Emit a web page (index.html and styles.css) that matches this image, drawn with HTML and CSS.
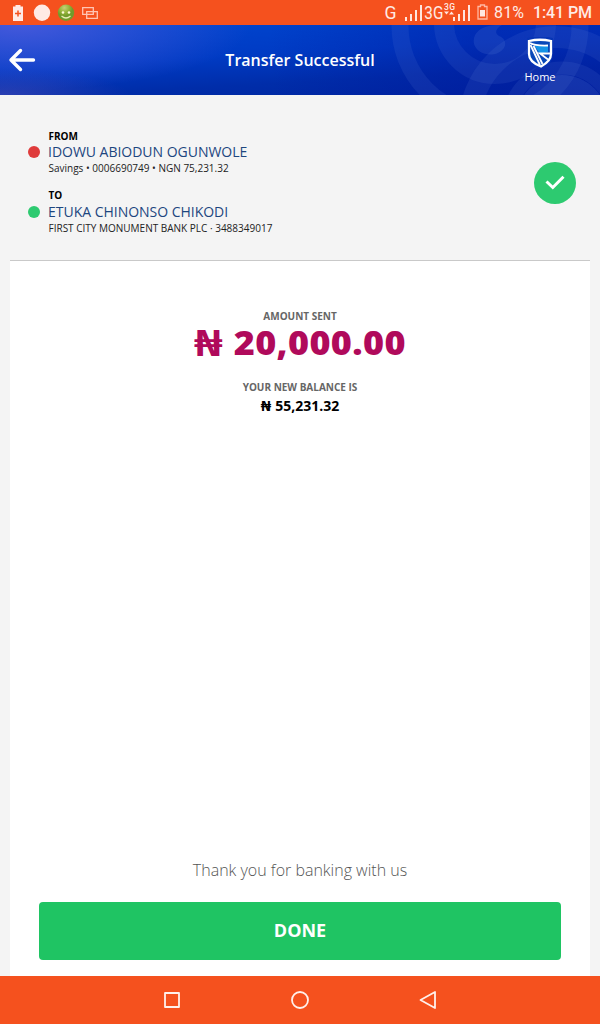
FILE: index.html
```html
<!DOCTYPE html>
<html lang="en">
<head>
<meta charset="utf-8">
<title>Transfer Successful</title>
<link rel="stylesheet" href="styles.css">
</head>
<body>
<div class="statusbar">
  <svg class="notifications" width="100" height="25" viewBox="0 0 100 25">
    <path fill="#ffeae5" d="M13 6.500h2.500v-1.500h5v1.500h2.500v14.500h-10z"/>
    <path stroke="#f5511e" stroke-width="1.500" d="M15 13.500h6M18 10.500v6"/>
    <circle cx="42" cy="12.700" r="8.200" fill="#ffeae5"/>
    <defs><radialGradient id="smile" cx=".4" cy=".2"><stop offset="0" stop-color="#c6d178"/><stop offset=".6" stop-color="#95b33a"/><stop offset="1" stop-color="#729b2b"/></radialGradient></defs>
    <circle cx="66" cy="12.700" r="8.200" fill="url(#smile)"/>
    <circle cx="63" cy="12.500" r="1.300" fill="#fff9d8"/><circle cx="69" cy="12.500" r="1.300" fill="#fff9d8"/>
    <path d="M61.500 16q4.500 4 9 0" fill="none" stroke="#e6edb0" stroke-width="1.200"/>
    <path d="M82.700 7.700h10.600v6.600h-10.600zM86.700 11.700h10.600v6.600h-10.600z" fill="none" stroke="#ffc5b4" stroke-width="1.300"/>
  </svg>
  <svg class="system" width="220" height="25" viewBox="380 0 220 25">
    <g fill="#ffe6df">
      <path d="M405 17h2v4h-2zM410 14h2v7h-2zM415 10h2v11h-2zM420 5h2v16h-2zM453 17h2v4h-2zM458 14h2v7h-2zM463 10h2v11h-2zM468 5h2v16h-2z"/>
      <path d="M444 11.500h5l-2.500 3zM449 14.500h5l-2.500-3z"/>
      <path d="M480 10h5v6.500h-5z"/>
    </g>
    <path d="M478 6.500h2.500v-1.500h4v1.500h2.500v12.500h-9z" fill="none" stroke="#ffb8a2" stroke-width="1.300"/>
    <g class="status-text" fill="#ffebe5">
      <text class="carrier" x="384.500" y="18.700" textLength="12" lengthAdjust="spacingAndGlyphs">G</text>
      <text class="carrier" x="424.300" y="18.700" textLength="19" lengthAdjust="spacingAndGlyphs">3G</text>
      <text class="tiny" x="444" y="9.500" textLength="11">3G</text>
      <text x="494" y="18" textLength="30">81%</text>
      <text class="clock" x="533" y="18" textLength="59">1:41 PM</text>
    </g>
  </svg>
</div>
<header class="header">
  <svg class="rings" width="220" height="70" viewBox="380 25 220 70" fill="none" stroke="#6c8ce0" stroke-opacity=".12">
    <circle cx="490" cy="26" r="90" stroke-width="17"/>
    <circle cx="495" cy="23" r="51" stroke-width="20"/>
    <path d="M502 25c-22-1-30 9-28 19 3 11 22 15 30 4 3-6 0-10-5-12-5-3-3-8 3-11z" fill="#6c8ce0" fill-opacity=".16" stroke="none"/>
    <circle cx="556" cy="123" r="86" stroke-width="22"/>
    <circle cx="562" cy="121" r="46" stroke="none" fill="#6c8ce0" fill-opacity=".18"/>
    <circle cx="562" cy="121" r="53" stroke-width="13"/>
  </svg>
  <svg class="back" width="28" height="24" viewBox="8 48 28 24" fill="none" stroke="#fff" stroke-width="3.400" stroke-linecap="round" stroke-linejoin="round"><path d="M20.500 50.500l-9.500 9.500 9.500 9.500M11 60h22.500"/></svg>
  <h1 class="title">Transfer Successful</h1>
  <div class="home">
    <svg width="28" height="32" viewBox="526 37 28 32">
      <path d="M527 38q13-3 26 0v16q0 10-13 15-13-5-13-15z" fill="#0735b5"/>
      <path d="M529 41q11-2.500 22 0v13q0 7-10 12.500-12-4.500-12-12.500z" fill="#0748b9" stroke="#fff" stroke-width="2.300"/>
      <path d="M534 45l14 1v6l-8 2z" fill="#1493e6"/>
      <path d="M530 43q5 3 18 2.500M530.500 45l9.500 20M533.500 46l9 18M550 53.500h-10l8 6" fill="none" stroke="#fff" stroke-width="1.800"/>
    </svg>
    <span class="home-label">Home</span>
  </div>
</header>
<main class="page">
  <section class="parties">
    <div class="party-list">
      <div class="party">
        <div class="role">FROM</div>
        <div class="name from">IDOWU ABIODUN OGUNWOLE</div>
        <div class="account savings">Savings • 0006690749 • NGN 75,231.32</div>
      </div>
      <div class="party recipient">
        <div class="role">TO</div>
        <div class="name to">ETUKA CHINONSO CHIKODI</div>
        <div class="account bank">FIRST CITY MONUMENT BANK PLC · 3488349017</div>
      </div>
    </div>
    <div class="success"><svg width="42" height="42" viewBox="0 0 42 42"><path d="M12.500 19.500l6.300 6L29.500 14.800" fill="none" stroke="#fff" stroke-width="3"/></svg></div>
  </section>
  <section class="receipt">
    <div class="caption">AMOUNT SENT</div>
    <div class="amount"><span class="naira">₦</span><span class="figure">20,000.00</span></div>
    <div class="caption balance-caption">YOUR NEW BALANCE IS</div>
    <div class="balance"><span class="naira">₦</span><span>55,231.32</span></div>
    <p class="thanks">Thank you for banking with us</p>
    <button class="done">DONE</button>
  </section>
</main>
<nav class="navbar">
  <svg width="600" height="48" viewBox="0 0 600 48" fill="none" stroke="#fff0eb" stroke-width="1.800" stroke-linejoin="round"><rect x="165" y="17" width="14" height="14"/><circle cx="300" cy="24" r="8"/><path d="M435 16v16l-14.500-8z"/></svg>
</nav>
</body>
</html>
```
FILE: styles.css
```css
* { box-sizing: border-box; }
body { margin: 0; width: 600px; height: 1024px; display: flex; flex-direction: column; overflow: hidden; background: #f4f4f4; font-family: "Open Sans", "Noto Sans", sans-serif; }
svg { display: block; }
.statusbar { height: 25px; flex: none; display: flex; justify-content: space-between; background: #f5511e; }
.status-text { font: 16px Roboto, sans-serif; }
.carrier { font-size: 17.500px; }
.tiny { font-size: 8.500px; font-weight: 500; }
.clock { font-weight: 500; }
.header { position: relative; height: 70px; flex: none; display: grid; grid-template-columns: 40px 1fr 40px; align-items: center; padding: 0 40px 0 8px; color: #fff;
  background:
    radial-gradient(ellipse 130px 25px at 0 100%, rgba(60,70,180,.7), transparent),
    radial-gradient(ellipse 230px 65px at 20px 0, rgba(75,90,220,.9), transparent),
    linear-gradient(177deg, #0046cf 0%, #003bc4 42%, #002da9 72%, #0026a0 100%); }
.header::after { content: ""; position: absolute; inset: 0; background: linear-gradient(90deg, transparent 45%, rgba(0,18,155,.4) 80%); }
.rings { position: absolute; right: 0; top: 0; z-index: 1; }
.back, .title, .home { position: relative; z-index: 2; }
.title { margin: 0; padding-left: 32px; text-align: center; font-size: 16px; font-weight: 600; line-height: 22px; }
.home { width: 40px; display: flex; flex-direction: column; align-items: center; padding-top: 1px; }
.home-label { font-size: 11px; line-height: 15px; }
.page { flex: 1; display: flex; flex-direction: column; padding: 0 10px; }
.parties { height: 166px; flex: none; display: flex; justify-content: space-between; align-items: flex-start; padding: 34px 14px 0 18px; border-bottom: 1px solid #c9c9c9; }
.party { height: 59px; padding-left: 20.500px; }
.role { font-size: 10px; font-weight: 700; line-height: 14.500px; color: #000; }
.recipient .role { line-height: 14px; margin-bottom: 2px; }
.name { display: flex; align-items: center; margin-left: -20.500px; gap: 8px; font-size: 14px; line-height: 16px; letter-spacing: -.02px; color: #1d467f; white-space: nowrap; }
.name::before { content: ""; width: 12px; height: 12px; border-radius: 50%; background: #df3b3b; }
.name.to::before { background: #2dca70; }
.account { font-size: 10px; line-height: 16px; color: #222; white-space: nowrap; }
.success { width: 42px; height: 42px; margin-top: 33px; border-radius: 50%; background: #2dca70; }
.receipt { flex: 1; display: flex; flex-direction: column; align-items: center; padding: 48px 29px 16px; background: #fff; }
.caption { font-size: 10px; font-weight: 700; line-height: 14px; color: #666; }
.amount { display: flex; width: 212px; justify-content: space-between; font-size: 33px; line-height: 39px; margin-bottom: 3px; color: #b00a5b; white-space: nowrap; }
.naira { display: inline-block; font-weight: 700; transform: scaleX(1.300); }
.amount .naira { transform: scale(1.520, 1.080); transform-origin: 0 55%; }
.figure { font-weight: 800; letter-spacing: .3px; transform: scaleX(1.090); transform-origin: 100% 50%; }
.balance-caption { margin-top: 15px; }
.balance { display: flex; gap: 5.500px; padding-left: 1px; font-size: 14px; font-weight: 700; line-height: 20px; margin-top: 2px; color: #000; }
.thanks { margin: auto 0 21px; font-size: 16px; font-weight: 300; line-height: 22px; color: #555; }
.done { width: 522px; height: 58px; border: 0; padding: 0 0 2px; border-radius: 4px; background: #1fc463; color: #fff; font: 700 18px "Open Sans", sans-serif; }
.navbar { height: 48px; flex: none; background: #f5511e; }
```
